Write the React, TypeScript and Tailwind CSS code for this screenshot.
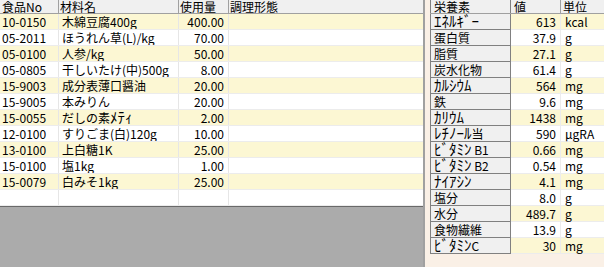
import React from 'react';

const FONT = "font-['Noto_Sans_CJK_JP','Noto_Sans_CJK_SC',sans-serif]";

const ingredients = [
  { code: '10-0150', name: '木綿豆腐400g', qty: '400.00' },
  { code: '05-2011', name: 'ほうれん草(L)/kg', qty: '70.00' },
  { code: '05-0100', name: '人参/kg', qty: '50.00' },
  { code: '05-0805', name: '干しいたけ(中)500g', qty: '8.00' },
  { code: '15-9003', name: '成分表薄口醤油', qty: '20.00' },
  { code: '15-9005', name: '本みりん', qty: '20.00' },
  { code: '15-0055', name: 'だしの素ﾒﾃｨ', qty: '2.00' },
  { code: '12-0100', name: 'すりごま(白)120g', qty: '10.00' },
  { code: '13-0100', name: '上白糖1K', qty: '25.00' },
  { code: '15-0100', name: '塩1kg', qty: '1.00' },
  { code: '15-0079', name: '白みそ1kg', qty: '25.00' },
  { code: '', name: '', qty: '' },
];

const nutrients = [
  { name: 'ｴﾈﾙｷﾞｰ', value: '613', unit: 'kcal' },
  { name: '蛋白質', value: '37.9', unit: 'g' },
  { name: '脂質', value: '27.1', unit: 'g' },
  { name: '炭水化物', value: '61.4', unit: 'g' },
  { name: 'ｶﾙｼｳﾑ', value: '564', unit: 'mg' },
  { name: '鉄', value: '9.6', unit: 'mg' },
  { name: 'ｶﾘｳﾑ', value: '1438', unit: 'mg' },
  { name: 'ﾚﾁﾉｰﾙ当', value: '590', unit: 'μgRA' },
  { name: 'ﾋﾞﾀﾐﾝ B1', value: '0.66', unit: 'mg' },
  { name: 'ﾋﾞﾀﾐﾝ B2', value: '0.54', unit: 'mg' },
  { name: 'ﾅｲｱｼﾝ', value: '4.1', unit: 'mg' },
  { name: '塩分', value: '8.0', unit: 'g' },
  { name: '水分', value: '489.7', unit: 'g' },
  { name: '食物繊維', value: '13.9', unit: 'g' },
  { name: 'ﾋﾞﾀﾐﾝC', value: '30', unit: 'mg' },
];

// half-width katakana looks tiny in Noto, so set those runs larger
const Kana: React.FC<{ text: string }> = ({ text }) => (
  <>
    {text.split(/([\uFF61-\uFF9F]+)/).map((part, i) =>
      /[\uFF61-\uFF9F]/.test(part) ? (
        <span key={i} className="text-[15px] leading-[14px]">{part}</span>
      ) : (
        <React.Fragment key={i}>{part}</React.Fragment>
      )
    )}
  </>
);

export default function App() {
  return (
    <div className={`flex w-[604px] h-[267px] overflow-hidden text-[12px] leading-[15px] text-black ${FONT}`}>
      {/* Ingredient grid */}
      <div className="w-[425px] shrink-0 flex flex-col bg-[#ababab] border-r-2 border-[#a0a0a0]">
        <div className="flex h-[14px] bg-[#f0f0f0] border-b border-[#a0a0a0] leading-[13px]">
          <div className="w-[59px] pl-[2px] border-r border-[#a0a0a0]">食品No</div>
          <div className="w-[120px] pl-[1px] border-r border-[#a0a0a0]">材料名</div>
          <div className="w-[50px] pl-[1px] border-r border-[#a0a0a0]">使用量</div>
          <div className="flex-1 pl-[1px]">調理形態</div>
        </div>
        <div className="border-b border-[#696969]">
          {ingredients.map((r, i) => (
            <div
              key={i}
              className={`flex h-[16px] border-b border-[#ececec] ${i % 2 === 0 && r.code ? 'bg-[#fcf7d3]' : 'bg-white'}`}
            >
              <div className="w-[59px] pl-[2px] border-r border-[#e6e6e6]">{r.code}</div>
              <div className="w-[120px] pl-[3px] border-r border-[#e6e6e6] whitespace-nowrap overflow-hidden">
                <Kana text={r.name} />
              </div>
              <div className="w-[50px] pr-[4px] text-right border-r border-[#e6e6e6]">{r.qty}</div>
              <div className="flex-1" />
            </div>
          ))}
        </div>
      </div>

      {/* Nutrient table */}
      <div className="flex-1 bg-[#faf0e6] pl-[5px]">
        <div className="w-[200px]">
          <div className="flex h-[14px] bg-[#f0f0f0] border-b border-[#a0a0a0] leading-[13px]">
            <div className="w-[81px] pl-[3px] border-x border-[#808080]">栄養素</div>
            <div className="w-[50px] pl-[3px] border-r border-[#a0a0a0]">値</div>
            <div className="flex-1 pl-[2px]">単位</div>
          </div>
          {nutrients.map((n, i) => (
            <div key={i} className={`flex h-[16px] ${i % 2 === 0 ? 'bg-[#fcf7d3]' : 'bg-white'}`}>
              <div className="w-[81px] pl-[3px] bg-[#f0f0f0] border-x border-b border-[#808080] whitespace-nowrap">
                <Kana text={n.name} />
              </div>
              <div className="w-[50px] pr-[4px] text-right border-r border-b border-[#ececec]">{n.value}</div>
              <div className="flex-1 pl-[4px] border-b border-[#ececec]">{n.unit}</div>
            </div>
          ))}
        </div>
      </div>
    </div>
  );
}
